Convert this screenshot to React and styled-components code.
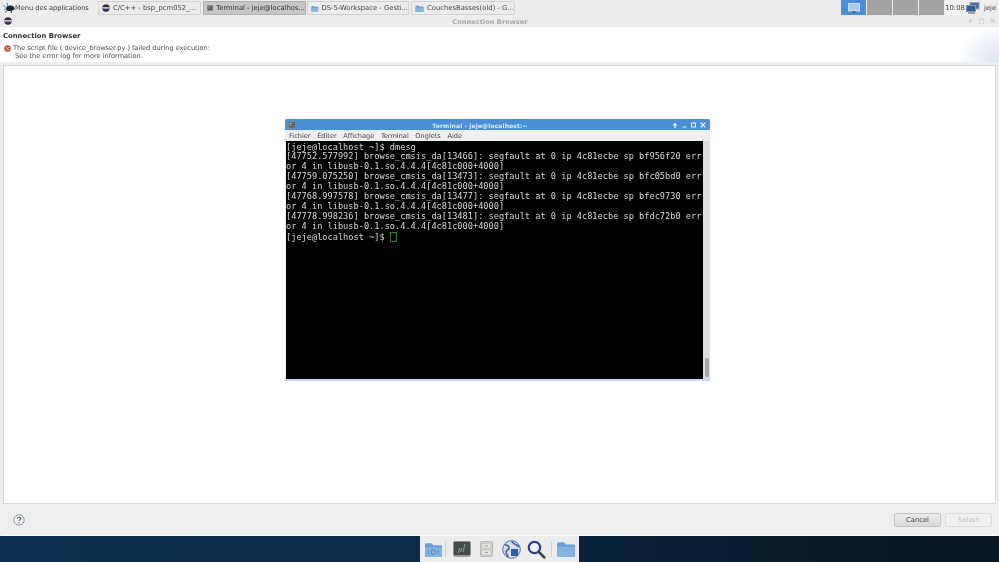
import React from "react";
import styled, { createGlobalStyle } from "styled-components";

const Global = createGlobalStyle`
  html, body { margin: 0; padding: 0; width: 999px; height: 562px; overflow: hidden; background: #eee; }
  #root { width: 999px; height: 562px; }
  * { box-sizing: border-box; }
`;
const Page = styled.div`
  width: 999px; height: 562px; display: flex; flex-direction: column; filter: blur(0.3px);
  font-family: "DejaVu Sans", sans-serif; font-size: 6.8px; color: #333; background: #eee;
`;
const Panel = styled.div`
  height: 15px; flex: none; display: flex; align-items: stretch; background: #ededed; padding-left: 3px;
`;
const AppMenu = styled.div`
  width: 95px; display: flex; align-items: center; gap: 0; padding-top: 1px; font-size: 6.6px; color: #3a3a3a; flex: none; white-space: nowrap;
`;
const Tab = styled.div`
  width: ${p => p.$w}px; margin-right: ${p => p.$gap}px; height: 14px; margin-top: 1px; padding-left: 3px; display: flex; align-items: center; gap: 3px;
  flex: none; overflow: hidden; white-space: nowrap; font-size: 6.8px;
  color: ${p => (p.$active ? "#2e2e2e" : "#484848")}; border: 1px solid ${p => (p.$active ? "#b0b0b0" : "#d2d2d2")};
  border-radius: 1px; background: ${p => (p.$active ? "#c6c6c6" : "#ececec")};
`;
const Spring = styled.div` flex: 1; `;
const Desk = styled.div`
  width: 25px; margin-right: 1px; height: 15px; flex: none;
  display: flex; align-items: center; justify-content: center;
  background: ${p => (p.$active ? "#4a90d9" : "#a3a3a3")};
`;
const Clock = styled.div`
  width: 20px; height: 15px; padding-top: 1px; display: flex; align-items: center; justify-content: center; font-size: 6.8px; color: #444; background: #f2f2f2;
`;
const Tray = styled.div` width: 16px; display: flex; align-items: center; justify-content: center; `;
const User = styled.div` width: 18px; padding: 1px 0 0 3px; display: flex; align-items: center; font-size: 6.8px; color: #444; `;

const TitleBar = styled.div`
  height: 12px; flex: none; display: flex; align-items: center; padding: 0 4px; background: #ececec;
`;
const TitleText = styled.div`
  flex: 1; padding-top: 2px; text-align: center; font-size: 6.5px; font-weight: bold; color: #a9a9a9; letter-spacing: .1px;
`;
const TitleButtons = styled.div` display: flex; gap: 5px; color: #b4b4b4; font-size: 6.5px; align-items: center; `;

const Header = styled.div`
  height: 35px; flex: none; padding: 5px 0 0 3px;
  background: radial-gradient(ellipse 42px 36px at 100% 100%, #dce4f3 0%, #eef2f9 60%, #fff 100%);
`;
const Heading = styled.div` font-size: 6.85px; font-weight: bold; color: #333; line-height: 9px; margin-bottom: 3px; `;
const Msg = styled.div` display: flex; gap: 2px; align-items: flex-start; line-height: 8px; font-size: 6.58px; color: #4a4a4a; padding-left: 1px; `;

const Main = styled.div`
  flex: 1; min-height: 0; display: flex; flex-direction: column; padding: 3px 3px 0 3px; background: #eee; position: relative;
`;
const Content = styled.div`
  height: 439px; flex: none; background: #fff; border: 1px solid #d8d8d8;
`;
const Footer = styled.div`
  flex: 1; display: flex; align-items: center; padding: 0 4px 0 10px; justify-content: space-between; border-bottom: 1px solid #fafafa;
`;
const Buttons = styled.div` display: flex; gap: 4px; margin-top: 1px; `;
const Button = styled.div`
  width: 47px; height: 14px; display: flex; align-items: center; justify-content: center; font-size: 6.8px; border-radius: 2px;
  color: ${p => (p.$disabled ? "#bcbcbc" : "#444")};
  border: 1px solid ${p => (p.$disabled ? "#dcdcdc" : "#c4c4c4")};
  background: ${p => (p.$disabled ? "#f0f0f0" : "linear-gradient(#ececec,#d8d8d8)")};
`;

const TermWin = styled.div`
  position: absolute; left: 285px; top: 57px; width: 425px; height: 262px; display: flex; flex-direction: column;
  background: #ebebeb; border-radius: 2px 2px 0 0; border-bottom: 2px solid #c4daf0;
`;
const TermTitle = styled.div`
  height: 11px; flex: none; display: flex; align-items: center; padding: 0 4px 0 3px; border-radius: 2px 2px 0 0;
  background: #4a90d9; color: #dfeafa;
`;
const TermTitleText = styled.div` flex: 1; text-align: center; padding: 1px 8px 0 0; font-size: 6px; font-weight: bold; letter-spacing: .12px; `;
const TermBtns = styled.div` display: flex; gap: 4px; align-items: center; `;
const Menu = styled.div`
  height: 11px; flex: none; display: flex; gap: 6.6px; align-items: center; padding-left: 4px; font-size: 6.6px; color: #444; background: #efefef;
`;
const TermBody = styled.div` flex: 1; min-height: 0; display: flex; padding-left: 1px; `;
const Screen = styled.pre`
  margin: 0; width: 417px; flex: none; background: #000; color: #d8d8d8; font-family: "DejaVu Sans Mono", monospace;
  font-size: 8.65px; line-height: 9.9px; padding: 1.5px 0 0 0; white-space: pre; overflow: hidden;
`;
const Cursor = styled.span`
  display: inline-block; width: 7px; height: 10px; vertical-align: -2px; border: 1px solid #1c8c1c;
`;
const Scroll = styled.div`
  flex: 1; position: relative; background: #dedede;
`;
const Thumb = styled.div`
  position: absolute; left: 2px; right: 1px; bottom: 2px; height: 19px; background: #a8a8a8; border-radius: 1px;
`;

const Desktop = styled.div`
  height: 26px; flex: none; display: flex; justify-content: center;
  background: linear-gradient(90deg, #0d3050 0%, #0a2a46 42%, #082238 60%, #04151f 100%);
`;
const Dock = styled.div`
  width: 159px; padding-left: 3px; background: #ececec; display: flex; align-items: center;
`;
const DockSlot = styled.div` width: ${p => p.$w}px; height: 26px; flex: none; display: flex; align-items: center; justify-content: center; `;
const Sep = styled.div` width: 1px; height: 15px; background: #d0d0d0; flex: none; `;

const Eclipse = () => (
  <svg width="8" height="8" viewBox="0 0 10 10"><circle cx="5" cy="5" r="4.6" fill="#2c2255" /><rect x="0.6" y="3.9" width="8.8" height="0.9" fill="#fff" /><rect x="0.8" y="5.6" width="8.4" height="0.8" fill="#fff" /><path d="M2 1.5A4.6 4.6 0 0 1 8 1.5" stroke="#e8902a" strokeWidth=".7" fill="none" /></svg>
);
const TermIcon = ({ s = 8 }) => (
  <svg width={s} height={s} viewBox="0 0 10 10"><rect x=".5" y="1" width="9" height="8" fill="#5e6462" stroke="#8a8f8d" strokeWidth=".7" /><path d="M2 3.2h3M2 5h2" stroke="#d8d8d8" strokeWidth=".8" /></svg>
);
const Folder = ({ w = 9, h = 9, mark }) => (
  <svg width={w} height={h} viewBox="0 0 18 16">
    <path d="M1 3a1 1 0 0 1 1-1h5l2 2h7a1 1 0 0 1 1 1v9a1 1 0 0 1-1 1H2a1 1 0 0 1-1-1z" fill="#6a9fd6" />
    <path d="M1 6h16v8a1 1 0 0 1-1 1H2a1 1 0 0 1-1-1z" fill="#85b3e2" />
    {mark && <path d="M7 8.5h2a2 2 0 0 1 0 4H7zM4 8.5v4M13.5 8.5v4" stroke="#4d81ba" strokeWidth=".8" fill="none" />}
  </svg>
);
const Mouse = () => (
  <svg width="12" height="12" viewBox="0 0 12 12">
    <path d="M3 6.5C3 4.5 5 3.5 7.5 3.5S11.5 5 11.5 6.5 9.5 9 7 9 3 8.5 3 6.5z" fill="#23232b" />
    <path d="M.5 3.5L3.5 5.5M4 1L5 4M1 7.5L3.5 7" stroke="#2f9bd8" strokeWidth="1" />
    <path d="M4 8.5L2.5 10.5M8 9l.5 2" stroke="#23232b" strokeWidth="1" />
  </svg>
);
const ErrorIcon = () => (
  <svg width="7" height="7" viewBox="0 0 8 8" style={{ marginTop: 1 }}><circle cx="4" cy="4" r="3.7" fill="#c9463f" /><path d="M2.6 2.6l2.8 2.8M5.4 2.6L2.6 5.4" stroke="#fff" strokeWidth="1" /></svg>
);
const Help = () => (
  <svg width="12" height="12" viewBox="0 0 12 12"><circle cx="6" cy="6" r="5.2" fill="#f3f4f8" stroke="#8c97ad" strokeWidth="1" /><path d="M4.3 4.6C4.4 3.6 5.1 3.2 6 3.2c1 0 1.8.6 1.8 1.4 0 1.3-1.8 1.3-1.8 2.5" stroke="#4d5a78" strokeWidth="1.1" fill="none" /><circle cx="6" cy="8.9" r=".7" fill="#4d5a78" /></svg>
);
const Monitor = () => (
  <svg width="12" height="10" viewBox="0 0 12 10"><rect x=".5" y=".5" width="11" height="7.5" fill="#a9cdf0" stroke="#dbe9f8" strokeWidth=".8" /><rect x="4.5" y="8.4" width="3" height="1.2" fill="#2f3a46" /></svg>
);
const NetIcon = () => (
  <svg width="14" height="12" viewBox="0 0 14 12"><rect x="4" y="0.5" width="9" height="6.5" fill="#3e6fb0" stroke="#9aa3ad" /><rect x="0.5" y="3.5" width="9" height="6" fill="#2d5a9a" stroke="#8d96a0" /><path d="M2 11h7" stroke="#555" /></svg>
);
const DockTerm = () => (
  <svg width="18" height="16" viewBox="0 0 18 16"><rect x=".5" y=".5" width="17" height="14" rx="1" fill="#454c4a" stroke="#8d9290" /><path d="M5 12l2-5M9 7L7.5 11M12 3l-2 8" stroke="#a5b0ac" strokeWidth=".8" fill="none" /><rect x="1" y="14.5" width="16" height="1.5" fill="#a0a0a0" /></svg>
);
const Cabinet = () => (
  <svg width="13" height="16" viewBox="0 0 13 16"><rect x=".5" y=".5" width="12" height="15" rx="1" fill="#d0d0cc" stroke="#b8b8b4" /><rect x="2" y="2.5" width="9" height="5" fill="#e4e4e1" stroke="#b4b4b0" strokeWidth=".5" /><rect x="2" y="9" width="9" height="5" fill="#e4e4e1" stroke="#b4b4b0" strokeWidth=".5" /><path d="M5 5h3M5 11.5h3" stroke="#a0a09d" /></svg>
);
const Globe = () => (
  <svg width="19" height="19" viewBox="0 0 19 19"><circle cx="9.5" cy="9.5" r="8.8" fill="#d8e2ee" stroke="#4c6ea5" /><path d="M3 5c2 0 4 1 4 3s-3 2-3 4 2 3 2 5M10 1c0 3 5 3 7 6M16 13c-2-2-5-2-6 0" stroke="#3a62a3" strokeWidth="1.6" fill="none" /><rect x="9" y="9" width="7" height="7" fill="#2f5fa8" /></svg>
);
const Lens = () => (
  <svg width="19" height="19" viewBox="0 0 19 19"><circle cx="7.5" cy="7.5" r="5.7" fill="#eef1f6" stroke="#2f3f93" strokeWidth="2.2" /><path d="M11.8 11.8l5.5 5.5" stroke="#3c3c3c" strokeWidth="2.6" strokeLinecap="round" /></svg>
);

const lines = `[jeje@localhost ~]$ dmesg
[47752.577992] browse_cmsis_da[13466]: segfault at 0 ip 4c81ecbe sp bf956f20 err
or 4 in libusb-0.1.so.4.4.4[4c81c000+4000]
[47759.075250] browse_cmsis_da[13473]: segfault at 0 ip 4c81ecbe sp bfc05bd0 err
or 4 in libusb-0.1.so.4.4.4[4c81c000+4000]
[47768.997578] browse_cmsis_da[13477]: segfault at 0 ip 4c81ecbe sp bfec9730 err
or 4 in libusb-0.1.so.4.4.4[4c81c000+4000]
[47778.998236] browse_cmsis_da[13481]: segfault at 0 ip 4c81ecbe sp bfdc72b0 err
or 4 in libusb-0.1.so.4.4.4[4c81c000+4000]
[jeje@localhost ~]$ `;

export default function App() {
  return (
    <Page>
      <Global />
      <Panel>
        <AppMenu><Mouse />Menu des applications</AppMenu>
        <Tab $w={103} $gap={2}><Eclipse />C/C++ - bsp_pcm052_...</Tab>
        <Tab $w={103} $gap={1} $active><TermIcon />Terminal - jeje@localhos...</Tab>
        <Tab $w={102} $gap={2}><Folder />DS-5-Workspace - Gesti...</Tab>
        <Tab $w={104} $gap={0}><Folder />CouchesBasses(old) - G...</Tab>
        <Spring />
        <Desk $active><Monitor /></Desk>
        <Desk /><Desk /><Desk />
        <Clock>10:08</Clock>
        <Tray><NetIcon /></Tray>
        <User>jeje</User>
      </Panel>
      <TitleBar>
        <Eclipse />
        <TitleText>Connection Browser</TitleText>
        <TitleButtons><span>+</span><span>□</span><span>✕</span></TitleButtons>
      </TitleBar>
      <Header>
        <Heading>Connection Browser</Heading>
        <Msg>
          <ErrorIcon />
          <div>The script file ( device_browser.py ) failed during execution:<br />&nbsp;See the error log for more information.</div>
        </Msg>
      </Header>
      <Main>
        <Content />
        <Footer>
          <Help />
          <Buttons><Button>Cancel</Button><Button $disabled>Select</Button></Buttons>
        </Footer>
        <TermWin>
          <TermTitle>
            <TermIcon />
            <TermTitleText>Terminal - jeje@localhost:~</TermTitleText>
            <TermBtns>
              <svg width="6" height="6" viewBox="0 0 6 6"><path d="M3 .5L5.5 3.5H.5zM2.3 3.5h1.4V6H2.3z" fill="#eaf2fb" /></svg>
              <svg width="5" height="6" viewBox="0 0 5 6"><path d="M.5 5h4" stroke="#eaf2fb" /></svg>
              <svg width="5" height="6" viewBox="0 0 5 6"><rect x=".5" y="1" width="4" height="4" fill="none" stroke="#eaf2fb" /></svg>
              <svg width="6" height="6" viewBox="0 0 6 6"><path d="M.7.7l4.6 4.6M5.3.7L.7 5.3" stroke="#fff" strokeWidth="1.1" /></svg>
            </TermBtns>
          </TermTitle>
          <Menu>
            <span>Fichier</span><span>Éditer</span><span>Affichage</span><span>Terminal</span><span>Onglets</span><span>Aide</span>
          </Menu>
          <TermBody>
            <Screen>{lines}<Cursor /></Screen>
            <Scroll><Thumb /></Scroll>
          </TermBody>
        </TermWin>
      </Main>
      <Desktop>
        <Dock>
          <DockSlot $w={20}><Folder w={19} h={17} mark /></DockSlot>
          <DockSlot $w={5}><Sep /></DockSlot>
          <DockSlot $w={27}><DockTerm /></DockSlot>
          <DockSlot $w={23}><Cabinet /></DockSlot>
          <DockSlot $w={27}><Globe /></DockSlot>
          <DockSlot $w={23}><Lens /></DockSlot>
          <DockSlot $w={7}><Sep /></DockSlot>
          <DockSlot $w={22}><Folder w={20} h={18} /></DockSlot>
        </Dock>
      </Desktop>
    </Page>
  );
}
